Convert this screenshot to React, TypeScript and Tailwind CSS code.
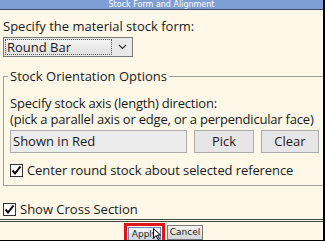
import React from "react";

function Check() {
  return (
    <span className="w-[13px] h-[13px] border border-[#333] bg-white flex items-center justify-center shrink-0">
      <svg width="11" height="11" viewBox="0 0 11 11">
        <path d="M1.5 5.5 L4 8.5 L9.5 1.5" fill="none" stroke="#000" strokeWidth="2" />
      </svg>
    </span>
  );
}

export default function App() {
  return (
    <div
      className="w-[325px] h-[241px] bg-[#fff7e7] border-r-2 border-b border-black flex flex-col overflow-hidden text-[#1a1a1a] whitespace-nowrap"
      style={{ fontFamily: '"Open Sans", "Noto Sans", sans-serif' }}
    >
      <div
        className="h-[10px] shrink-0 bg-[#7e9ed6] border-b border-[#3b4a66] text-white text-[8px] leading-[9px] text-center"
        style={{ fontFamily: '"DejaVu Sans", sans-serif' }}
      >
        Stock Form and Alignment
      </div>

      <div className="px-[3px] flex flex-col">
        <div className="text-[13px] leading-[18px] mt-[7px]">Specify the material stock form:</div>
        <div className="mt-[2px] w-[130px] h-[20px] border border-[#7a7a7a] bg-[#e9e9e9] flex">
          <div className="flex-1 m-[1px] border border-dotted border-[#555] bg-gradient-to-b from-[#f4f4f4] to-[#e2e2e2] text-[13px] leading-[15px] pl-[1px]">
            Round Bar
          </div>
          <div className="w-[19px] flex items-center justify-center">
            <svg width="9" height="6" viewBox="0 0 9 6">
              <path d="M1 1 L4.5 4.5 L8 1" fill="none" stroke="#333" strokeWidth="1.2" />
            </svg>
          </div>
        </div>

        <div className="relative mt-[19px] border border-[#a0a0a0] w-[330px] h-[110px] px-[6px] pt-[18px]">
          <div className="absolute left-[4px] top-[-9px] bg-[#fff7e7] px-[2px] text-[13px] leading-[17px]">
            Stock Orientation Options
          </div>
          <div className="text-[13px] leading-[16px] tracking-[-0.2px]">Specify stock axis (length) direction:</div>
          <div className="text-[13px] leading-[16px] tracking-[-0.2px]">
            (pick a parallel axis or edge, or a perpendicular face)
          </div>
          <div className="flex mt-[3px] gap-[7px]">
            <div className="w-[177px] h-[23px] border border-[#adadad] bg-[#ececec] text-[13px] leading-[21px] pl-[2px]">
              Shown in Red
            </div>
            <div className="w-[60px] h-[23px] border border-[#adadad] bg-[#e6e6e6] text-[13px] leading-[21px] text-center">
              Pick
            </div>
            <div className="w-[58px] h-[23px] border border-[#adadad] bg-[#e6e6e6] text-[13px] leading-[21px] text-center">
              Clear
            </div>
          </div>
          <div className="flex items-center gap-[4px] mt-[9px]">
            <Check />
            <span className="text-[13px] leading-[16px] tracking-[-0.1px]">Center round stock about selected reference</span>
          </div>
        </div>

        <div className="flex items-center gap-[4px] mt-[15px]">
          <Check />
          <span className="text-[13px] leading-[16px]">Show Cross Section</span>
        </div>
      </div>

      <div className="mt-[2px] h-[3px] shrink-0 border-t border-b border-[#3d4a3d]" />

      <div className="flex justify-center gap-[2px] mt-[1px] pl-[4px]">
        <div className="relative border-[3px] border-[#e0141c] p-[1px]">
          <div
            className="w-[33px] h-[14px] border border-[#6c86b8] bg-gradient-to-b from-[#f4f6fb] to-[#c9d3e6] text-[9px] leading-[12px] text-center text-[#222]"
            style={{ fontFamily: '"DejaVu Sans", sans-serif' }}
          >
            Apply
          </div>
          <svg className="absolute left-[26px] top-[2px]" width="8" height="12" viewBox="0 0 8 12">
            <path d="M0.5 0.5 L0.5 10 L3 7.5 L5 11.5 L6.5 10.8 L4.5 7 L7.5 7 Z" fill="#fff" stroke="#000" strokeWidth="1" />
          </svg>
        </div>
        <div className="mt-[2px]">
          <div
            className="w-[36px] h-[15px] border border-[#7a7a7a] bg-gradient-to-b from-[#f4f4f4] to-[#d4d4d4] text-[9px] leading-[13px] text-center"
            style={{ fontFamily: '"DejaVu Sans", sans-serif' }}
          >
            Cancel
          </div>
        </div>
      </div>
    </div>
  );
}
